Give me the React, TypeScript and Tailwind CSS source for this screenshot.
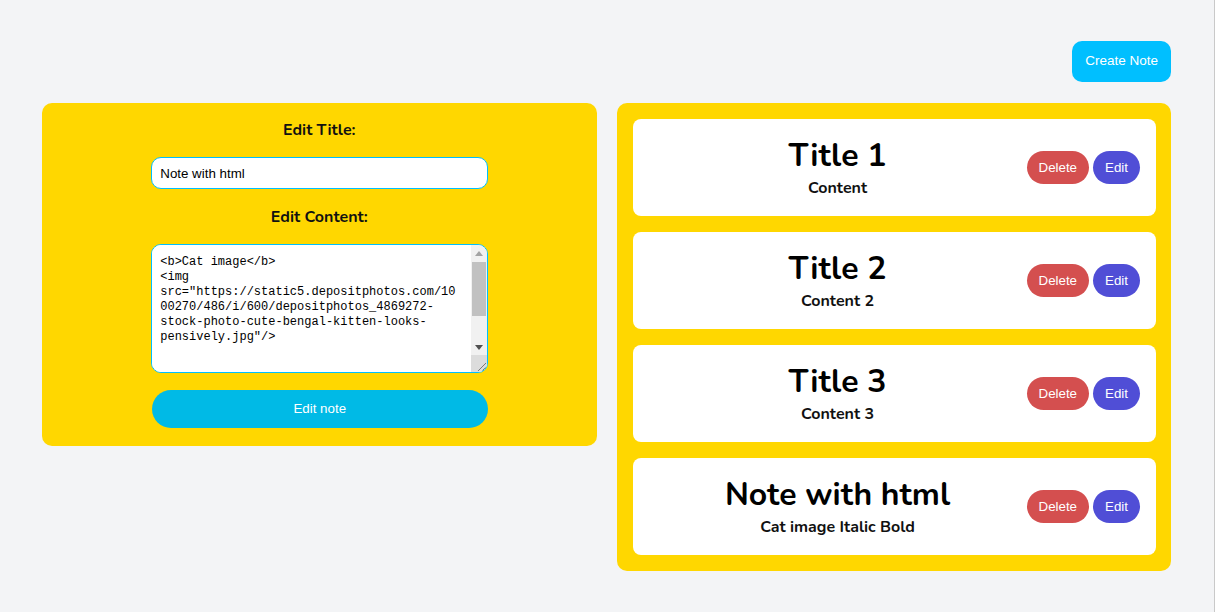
import React from "react";

const notes = [
  { title: "Title 1", content: "Content" },
  { title: "Title 2", content: "Content 2" },
  { title: "Title 3", content: "Content 3" },
  { title: "Note with html", content: "Cat image Italic Bold" },
];

const textareaValue =
  '<b>Cat image</b>\n<img src="https://static5.depositphotos.com/1000270/486/i/600/depositphotos_4869272-stock-photo-cute-bengal-kitten-looks-pensively.jpg"/>';

function FakeScrollbar() {
  return (
    <div className="w-[16px] shrink-0 flex flex-col bg-[#f1f1f1]">
      <div className="h-[17px] flex items-center justify-center">
        <svg width="8" height="5" viewBox="0 0 8 5">
          <polygon points="0,5 8,5 4,0" fill="#a3a3a3" />
        </svg>
      </div>
      <div className="flex-1 px-[1px]">
        <div className="h-[54px] bg-[#c1c1c1]" />
      </div>
      <div className="h-[16px] flex items-center justify-center">
        <svg width="8" height="5" viewBox="0 0 8 5">
          <polygon points="0,0 8,0 4,5" fill="#505050" />
        </svg>
      </div>
      <div className="h-[17px] bg-[#dcdcdc] flex items-end justify-end pr-[1px] pb-[1px]">
        <svg width="10" height="10" viewBox="0 0 10 10">
          <line x1="2" y1="10" x2="10" y2="2" stroke="#7a7a7a" strokeWidth="1" />
          <line x1="6" y1="10" x2="10" y2="6" stroke="#7a7a7a" strokeWidth="1" />
        </svg>
      </div>
    </div>
  );
}

export default function App() {
  const heading = { fontFamily: "Nunito, Lato, 'Noto Sans', sans-serif" };
  const arial = { fontFamily: "'Liberation Sans', Arial, sans-serif" };
  return (
    <div className="min-h-[612px] w-full bg-[#f3f4f6] border-r border-[#c9c9c9]">
      <div className="pl-[42px] pr-[43px] pt-[41px] pb-[41px]">
        <div className="flex justify-end">
          <button
            style={arial}
            className="h-[41px] px-[13px] rounded-[10px] bg-[#00bfff] text-white text-[13.5px]"
          >
            Create Note
          </button>
        </div>
        <div className="mt-[21px] grid grid-cols-2 gap-5 items-start">
          <div className="bg-[#ffd700] rounded-[10px] px-4 pt-4 pb-[18px] flex flex-col items-center gap-4">
            <div style={heading} className="text-[16px] leading-[22px] font-bold text-[#111]">
              Edit Title:
            </div>
            <input
              style={arial}
              defaultValue="Note with html"
              className="ml-[1px] w-[337px] h-[32px] rounded-[10px] border border-[#00bfff] bg-white px-2 text-[13.33px] text-black outline-none"
            />
            <div style={heading} className="mt-[1px] text-[16px] leading-[22px] font-bold text-[#111]">
              Edit Content:
            </div>
            <div className="ml-[1px] w-[337px] h-[129px] rounded-[10px] border border-[#00bfff] bg-white flex overflow-hidden">
              <textarea
                defaultValue={textareaValue}
                style={{ fontFamily: "'Liberation Mono', 'DejaVu Sans Mono', monospace" }}
                className="w-0 flex-1 h-full bg-white pl-2 pr-[11px] pt-[10px] pb-2 text-[12px] leading-[15px] text-black overflow-hidden outline-none resize-none"
              />
              <FakeScrollbar />
            </div>
            <button
              style={arial}
              className="ml-[1px] mt-[1px] w-[336px] h-[38px] rounded-full bg-[#00bae6] text-white text-[13.33px]"
            >
              Edit note
            </button>
          </div>
          <div className="bg-[#ffd700] rounded-[10px] pl-4 pr-[15px] pt-4 pb-4 flex flex-col gap-4">
            {notes.map((n) => (
              <div
                key={n.title}
                className="h-[97px] bg-white rounded-[8px] flex items-center px-4"
              >
                <div className="flex-1 flex flex-col items-center" style={heading}>
                  <div className="text-[32px] leading-[38px] font-bold text-black">
                    {n.title}
                  </div>
                  <div className="text-[16px] leading-[20px] font-bold text-[#111] mt-[3px]">
                    {n.content}
                  </div>
                </div>
                <div className="flex gap-1" style={arial}>
                  <button className="h-[33px] px-3 rounded-full bg-[#d44f4f] text-white text-[13.33px]">
                    Delete
                  </button>
                  <button className="h-[33px] px-3 rounded-full bg-[#504ed6] text-white text-[13.33px]">
                    Edit
                  </button>
                </div>
              </div>
            ))}
          </div>
        </div>
      </div>
    </div>
  );
}
